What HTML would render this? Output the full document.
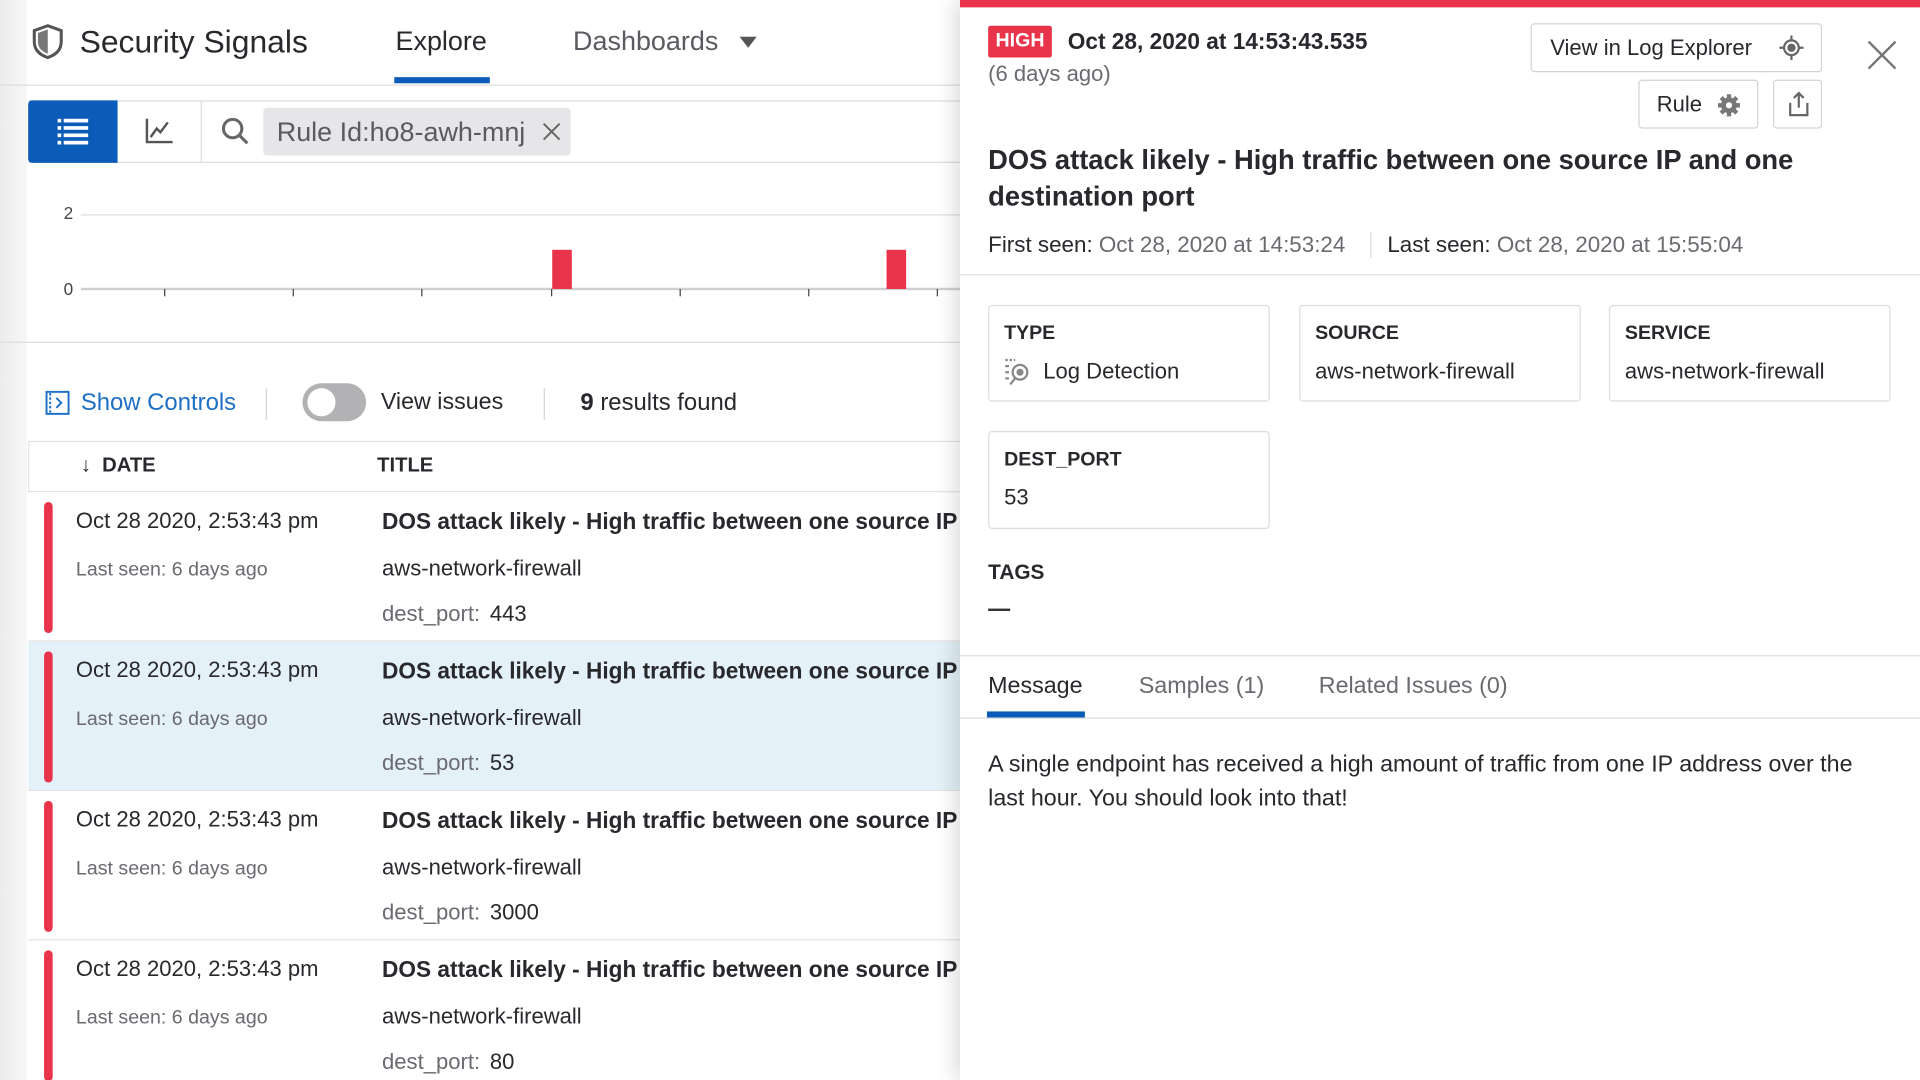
<!DOCTYPE html>
<html><head><meta charset="utf-8"><style>
*{box-sizing:border-box;margin:0;padding:0}
html,body{width:1920px;height:1080px;overflow:hidden;background:#fff;font-family:"Liberation Sans",sans-serif;color:#28282d}
#w{position:absolute;left:0;top:0;width:1568px;height:882px;transform:scale(1.22449);transform-origin:0 0;overflow:hidden}
.a{position:absolute;white-space:nowrap}
#left{position:absolute;left:0;top:0;width:784px;height:882px;background:#fff;overflow:hidden}
#right{position:absolute;left:784px;top:0;width:784px;height:882px;background:#fff;box-shadow:-6px 0 14px rgba(0,0,0,.12)}
.row{position:absolute;left:23px;width:780px;height:122px;border-bottom:1px solid #e2e2e2;white-space:nowrap}
.row .bar{position:absolute;left:13px;top:8px;width:7px;height:107px;background:#e8334a;border-radius:4px}
.row .d{position:absolute;left:39px;top:13px;font-size:18px}
.row .l{position:absolute;left:39px;top:55px;font-size:16px;color:#6a6a70}
.row .t{position:absolute;left:289px;top:13px;font-size:18.5px;font-weight:bold}
.row .s{position:absolute;left:289px;top:52px;font-size:18px}
.row .p{position:absolute;left:289px;top:89px;font-size:18px;color:#6a6a70}
.row .p b{font-weight:normal;color:#28282d;margin-left:8px}
.card{position:absolute;border:1px solid #dcdcdc;border-radius:3px;width:230px;height:79px}
.card .k{position:absolute;left:12px;top:14px;font-size:16px;font-weight:bold}
.card .v{position:absolute;left:12px;top:43px;font-size:18px}
.btn{position:absolute;border:1px solid #d4d4d4;border-radius:3px;background:#fff;font-size:18px}
</style></head><body><div id="w">
<div id="left">
<div style="position:absolute;left:0;top:0;width:22px;height:882px;background:linear-gradient(90deg,#ececec,#f7f7f7)"></div>
<svg class="a" style="left:25px;top:19px" width="28" height="30" viewBox="0 0 28 30"><path d="M14 2 L25 6 V15 C25 22 20 26 14 28 C8 26 3 22 3 15 V6 Z" fill="none" stroke="#555" stroke-width="2.5"/><path d="M14 5 L14 25 C9 23 6 20 6 15 V8 Z" fill="#777"/></svg>
<div class="a" style="left:65px;top:19px;font-size:26px;color:#28282d">Security Signals</div>
<div class="a" style="left:323px;top:21px;font-size:22px">Explore</div>
<div class="a" style="left:322px;top:63px;width:78px;height:5px;background:#0b5cb8"></div>
<div class="a" style="left:468px;top:21px;font-size:22px;color:#5a5a60">Dashboards</div>
<div class="a" style="left:604px;top:30px;border-left:7px solid transparent;border-right:7px solid transparent;border-top:9px solid #555"></div>
<div class="a" style="left:0;top:69px;width:784px;height:1px;background:#dcdcdc"></div>
<div class="a" style="left:23px;top:82px;width:761px;height:51px;border-top:1px solid #dcdcdc;border-bottom:1px solid #dcdcdc"></div>
<div class="a" style="left:23px;top:82px;width:73px;height:51px;background:#0b5cb8;border-radius:3px 0 0 3px"></div>
<svg class="a" style="left:47px;top:96px" width="26" height="22" viewBox="0 0 26 22" fill="#fff"><rect x="0" y="1" width="3" height="3"/><rect x="5" y="1" width="20" height="3"/><rect x="0" y="7" width="3" height="3"/><rect x="5" y="7" width="20" height="3"/><rect x="0" y="13" width="3" height="3"/><rect x="5" y="13" width="20" height="3"/><rect x="0" y="19" width="3" height="3"/><rect x="5" y="19" width="20" height="3"/></svg>
<div class="a" style="left:164px;top:83px;width:1px;height:49px;background:#dcdcdc"></div>
<svg class="a" style="left:118px;top:96px" width="24" height="22" viewBox="0 0 24 22" fill="none" stroke="#555" stroke-width="2"><path d="M2 1 V20 H23"/><path d="M5 16 L10 9 L13 12 L19 4"/></svg>
<svg class="a" style="left:180px;top:95px" width="26" height="26" viewBox="0 0 26 26" fill="none" stroke="#666" stroke-width="2.5"><circle cx="10" cy="10" r="7.5"/><path d="M15.5 15.5 L22 22"/></svg>
<div class="a" style="left:215px;top:88px;width:251px;height:39px;background:#e6e6e8;border-radius:3px"></div>
<div class="a" style="left:226px;top:95px;font-size:22px;color:#5a5a60">Rule Id:ho8-awh-mnj</div>
<svg class="a" style="left:443px;top:100px" width="15" height="15" viewBox="0 0 15 15" stroke="#666" stroke-width="1.6"><path d="M1 1 L14 14 M14 1 L1 14"/></svg>
<div class="a" style="left:52px;top:166px;font-size:14px;color:#444">2</div>
<div class="a" style="left:52px;top:228px;font-size:14px;color:#444">0</div>
<div class="a" style="left:66px;top:175px;width:718px;height:1px;background:#dedede"></div>
<div class="a" style="left:66px;top:235px;width:718px;height:2px;background:#cfcfcf"></div>
<div class="a" style="left:134px;top:236px;width:1px;height:6px;background:#444"></div>
<div class="a" style="left:239px;top:236px;width:1px;height:6px;background:#444"></div>
<div class="a" style="left:344px;top:236px;width:1px;height:6px;background:#444"></div>
<div class="a" style="left:450px;top:236px;width:1px;height:6px;background:#444"></div>
<div class="a" style="left:555px;top:236px;width:1px;height:6px;background:#444"></div>
<div class="a" style="left:660px;top:236px;width:1px;height:6px;background:#444"></div>
<div class="a" style="left:765px;top:236px;width:1px;height:6px;background:#444"></div>
<div class="a" style="left:451px;top:204px;width:16px;height:32px;background:#e8334a"></div>
<div class="a" style="left:724px;top:204px;width:16px;height:32px;background:#e8334a"></div>
<div class="a" style="left:0;top:279px;width:784px;height:1px;background:#dcdcdc"></div>
<svg class="a" style="left:37px;top:319px" width="20" height="20" viewBox="0 0 20 20" fill="none" stroke="#1f6fc5" stroke-width="1.6"><rect x="1" y="1" width="18" height="18"/><path d="M4 2 V18" stroke-dasharray="2 1.5"/><path d="M9 6 L13 10 L9 14"/></svg>
<div class="a" style="left:66px;top:318px;font-size:19.5px;color:#1f6fc5">Show Controls</div>
<div class="a" style="left:217px;top:317px;width:1px;height:26px;background:#d4d4d4"></div>
<div class="a" style="left:247px;top:313px;width:52px;height:31px;border-radius:16px;background:#b2b2b4"></div>
<div class="a" style="left:251px;top:317px;width:23px;height:23px;border-radius:50%;background:#fff"></div>
<div class="a" style="left:311px;top:318px;font-size:19px">View issues</div>
<div class="a" style="left:444px;top:317px;width:1px;height:26px;background:#d4d4d4"></div>
<div class="a" style="left:474px;top:318px;font-size:19.5px"><b>9</b> results found</div>
<div class="a" style="left:23px;top:360px;width:780px;height:42px;border-top:1px solid #e2e2e2;border-left:1px solid #e2e2e2;border-bottom:1px solid #e2e2e2"></div>
<div class="a" style="left:66px;top:371px;font-size:16.5px;font-weight:bold">↓&nbsp; DATE</div>
<div class="a" style="left:308px;top:371px;font-size:16.5px;font-weight:bold">TITLE</div>
<div class="row" style="top:402px"><div class="bar"></div><div class="d">Oct 28 2020, 2:53:43 pm</div><div class="l">Last seen: 6 days ago</div><div class="t">DOS attack likely - High traffic between one source IP and one destination port</div><div class="s">aws-network-firewall</div><div class="p">dest_port:<b>443</b></div></div>
<div class="row" style="top:524px;background:#e4f1f8"><div class="bar"></div><div class="d">Oct 28 2020, 2:53:43 pm</div><div class="l">Last seen: 6 days ago</div><div class="t">DOS attack likely - High traffic between one source IP and one destination port</div><div class="s">aws-network-firewall</div><div class="p">dest_port:<b>53</b></div></div>
<div class="row" style="top:646px"><div class="bar"></div><div class="d">Oct 28 2020, 2:53:43 pm</div><div class="l">Last seen: 6 days ago</div><div class="t">DOS attack likely - High traffic between one source IP and one destination port</div><div class="s">aws-network-firewall</div><div class="p">dest_port:<b>3000</b></div></div>
<div class="row" style="top:768px"><div class="bar"></div><div class="d">Oct 28 2020, 2:53:43 pm</div><div class="l">Last seen: 6 days ago</div><div class="t">DOS attack likely - High traffic between one source IP and one destination port</div><div class="s">aws-network-firewall</div><div class="p">dest_port:<b>80</b></div></div>
</div>
<div id="right">
<div class="a" style="left:0;top:0;width:784px;height:6px;background:#e8334a"></div>
<div class="a" style="left:23px;top:21px;width:52px;height:26px;background:#e8334a;border-radius:2px;color:#fff;font-weight:bold;font-size:16px;text-align:center;line-height:26px">HIGH</div>
<div class="a" style="left:88px;top:23px;font-size:18.5px;font-weight:bold">Oct 28, 2020 at 14:53:43.535</div>
<div class="a" style="left:23px;top:50px;font-size:18px;color:#6a6a70">(6 days ago)</div>
<div class="btn" style="left:466px;top:19px;width:238px;height:40px"><span class="a" style="left:15px;top:9px">View in Log Explorer</span>
<svg class="a" style="left:202px;top:9px" width="20" height="20" viewBox="0 0 20 20" fill="none" stroke="#666" stroke-width="1.8"><circle cx="10" cy="10" r="6"/><circle cx="10" cy="10" r="2.5" fill="#666"/><path d="M10 0V4M10 16V20M0 10H4M16 10H20"/></svg></div>
<div class="btn" style="left:554px;top:65px;width:98px;height:40px"><span class="a" style="left:14px;top:9px">Rule</span>
<svg class="a" style="left:63px;top:10px" width="20" height="20" viewBox="0 0 20 20"><circle cx="10" cy="10" r="6.5" fill="#777"/><g stroke="#777" stroke-width="3.5"><path d="M10 1V19M1 10H19M3.6 3.6L16.4 16.4M16.4 3.6L3.6 16.4"/></g><circle cx="10" cy="10" r="2.5" fill="#fff"/></svg></div>
<div class="btn" style="left:664px;top:65px;width:40px;height:40px">
<svg class="a" style="left:10px;top:8px" width="20" height="22" viewBox="0 0 20 22" fill="none" stroke="#666" stroke-width="1.8"><path d="M10 14V2M6 6L10 2L14 6M3 10V20H17V10"/></svg></div>
<svg class="a" style="left:741px;top:33px" width="24" height="24" viewBox="0 0 24 24" stroke="#777" stroke-width="2"><path d="M1 1L23 23M23 1L1 23"/></svg>
<div class="a" style="left:23px;top:116px;font-size:22.3px;font-weight:bold;line-height:30px">DOS attack likely - High traffic between one source IP and one<br>destination port</div>
<div class="a" style="left:23px;top:189px;font-size:18.3px">First seen: <span style="color:#6a6a70">Oct 28, 2020 at 14:53:24</span></div>
<div class="a" style="left:335px;top:189px;width:1px;height:22px;background:#ddd"></div>
<div class="a" style="left:349px;top:189px;font-size:18.3px">Last seen: <span style="color:#6a6a70">Oct 28, 2020 at 15:55:04</span></div>
<div class="a" style="left:0;top:224px;width:784px;height:1px;background:#dcdcdc"></div>
<div class="card" style="left:23px;top:249px"><div class="k">TYPE</div><div class="v" style="left:44px">Log Detection</div>
<svg class="a" style="left:12px;top:42px" width="22" height="24" viewBox="0 0 22 24" fill="none" stroke="#888" stroke-width="1.8"><path d="M1 2H9" stroke-dasharray="2 1.5"/><path d="M1 7H4M1 12H4M1 17H4"/><circle cx="13" cy="12" r="6"/><circle cx="13" cy="12" r="2" fill="#888"/><path d="M9 17L5 22"/></svg></div>
<div class="card" style="left:277px;top:249px"><div class="k">SOURCE</div><div class="v">aws-network-firewall</div></div>
<div class="card" style="left:530px;top:249px"><div class="k">SERVICE</div><div class="v">aws-network-firewall</div></div>
<div class="card" style="left:23px;top:352px;height:80px"><div class="k">DEST_PORT</div><div class="v">53</div></div>
<div class="a" style="left:23px;top:458px;font-size:17px;font-weight:bold">TAGS</div>
<div class="a" style="left:23px;top:497px;width:18px;height:2px;background:#333"></div>
<div class="a" style="left:0;top:535px;width:784px;height:1px;background:#dcdcdc"></div>
<div class="a" style="left:23px;top:550px;font-size:19px">Message</div>
<div class="a" style="left:22px;top:581px;width:80px;height:5px;background:#0b5cb8"></div>
<div class="a" style="left:146px;top:550px;font-size:19px;color:#6a6a70">Samples (1)</div>
<div class="a" style="left:293px;top:550px;font-size:19px;color:#6a6a70">Related Issues (0)</div>
<div class="a" style="left:0;top:586px;width:784px;height:1px;background:#dcdcdc"></div>
<div class="a" style="left:23px;top:611px;font-size:19px;line-height:28px">A single endpoint has received a high amount of traffic from one IP address over the<br>last hour. You should look into that!</div>
</div>
</div></body></html>
